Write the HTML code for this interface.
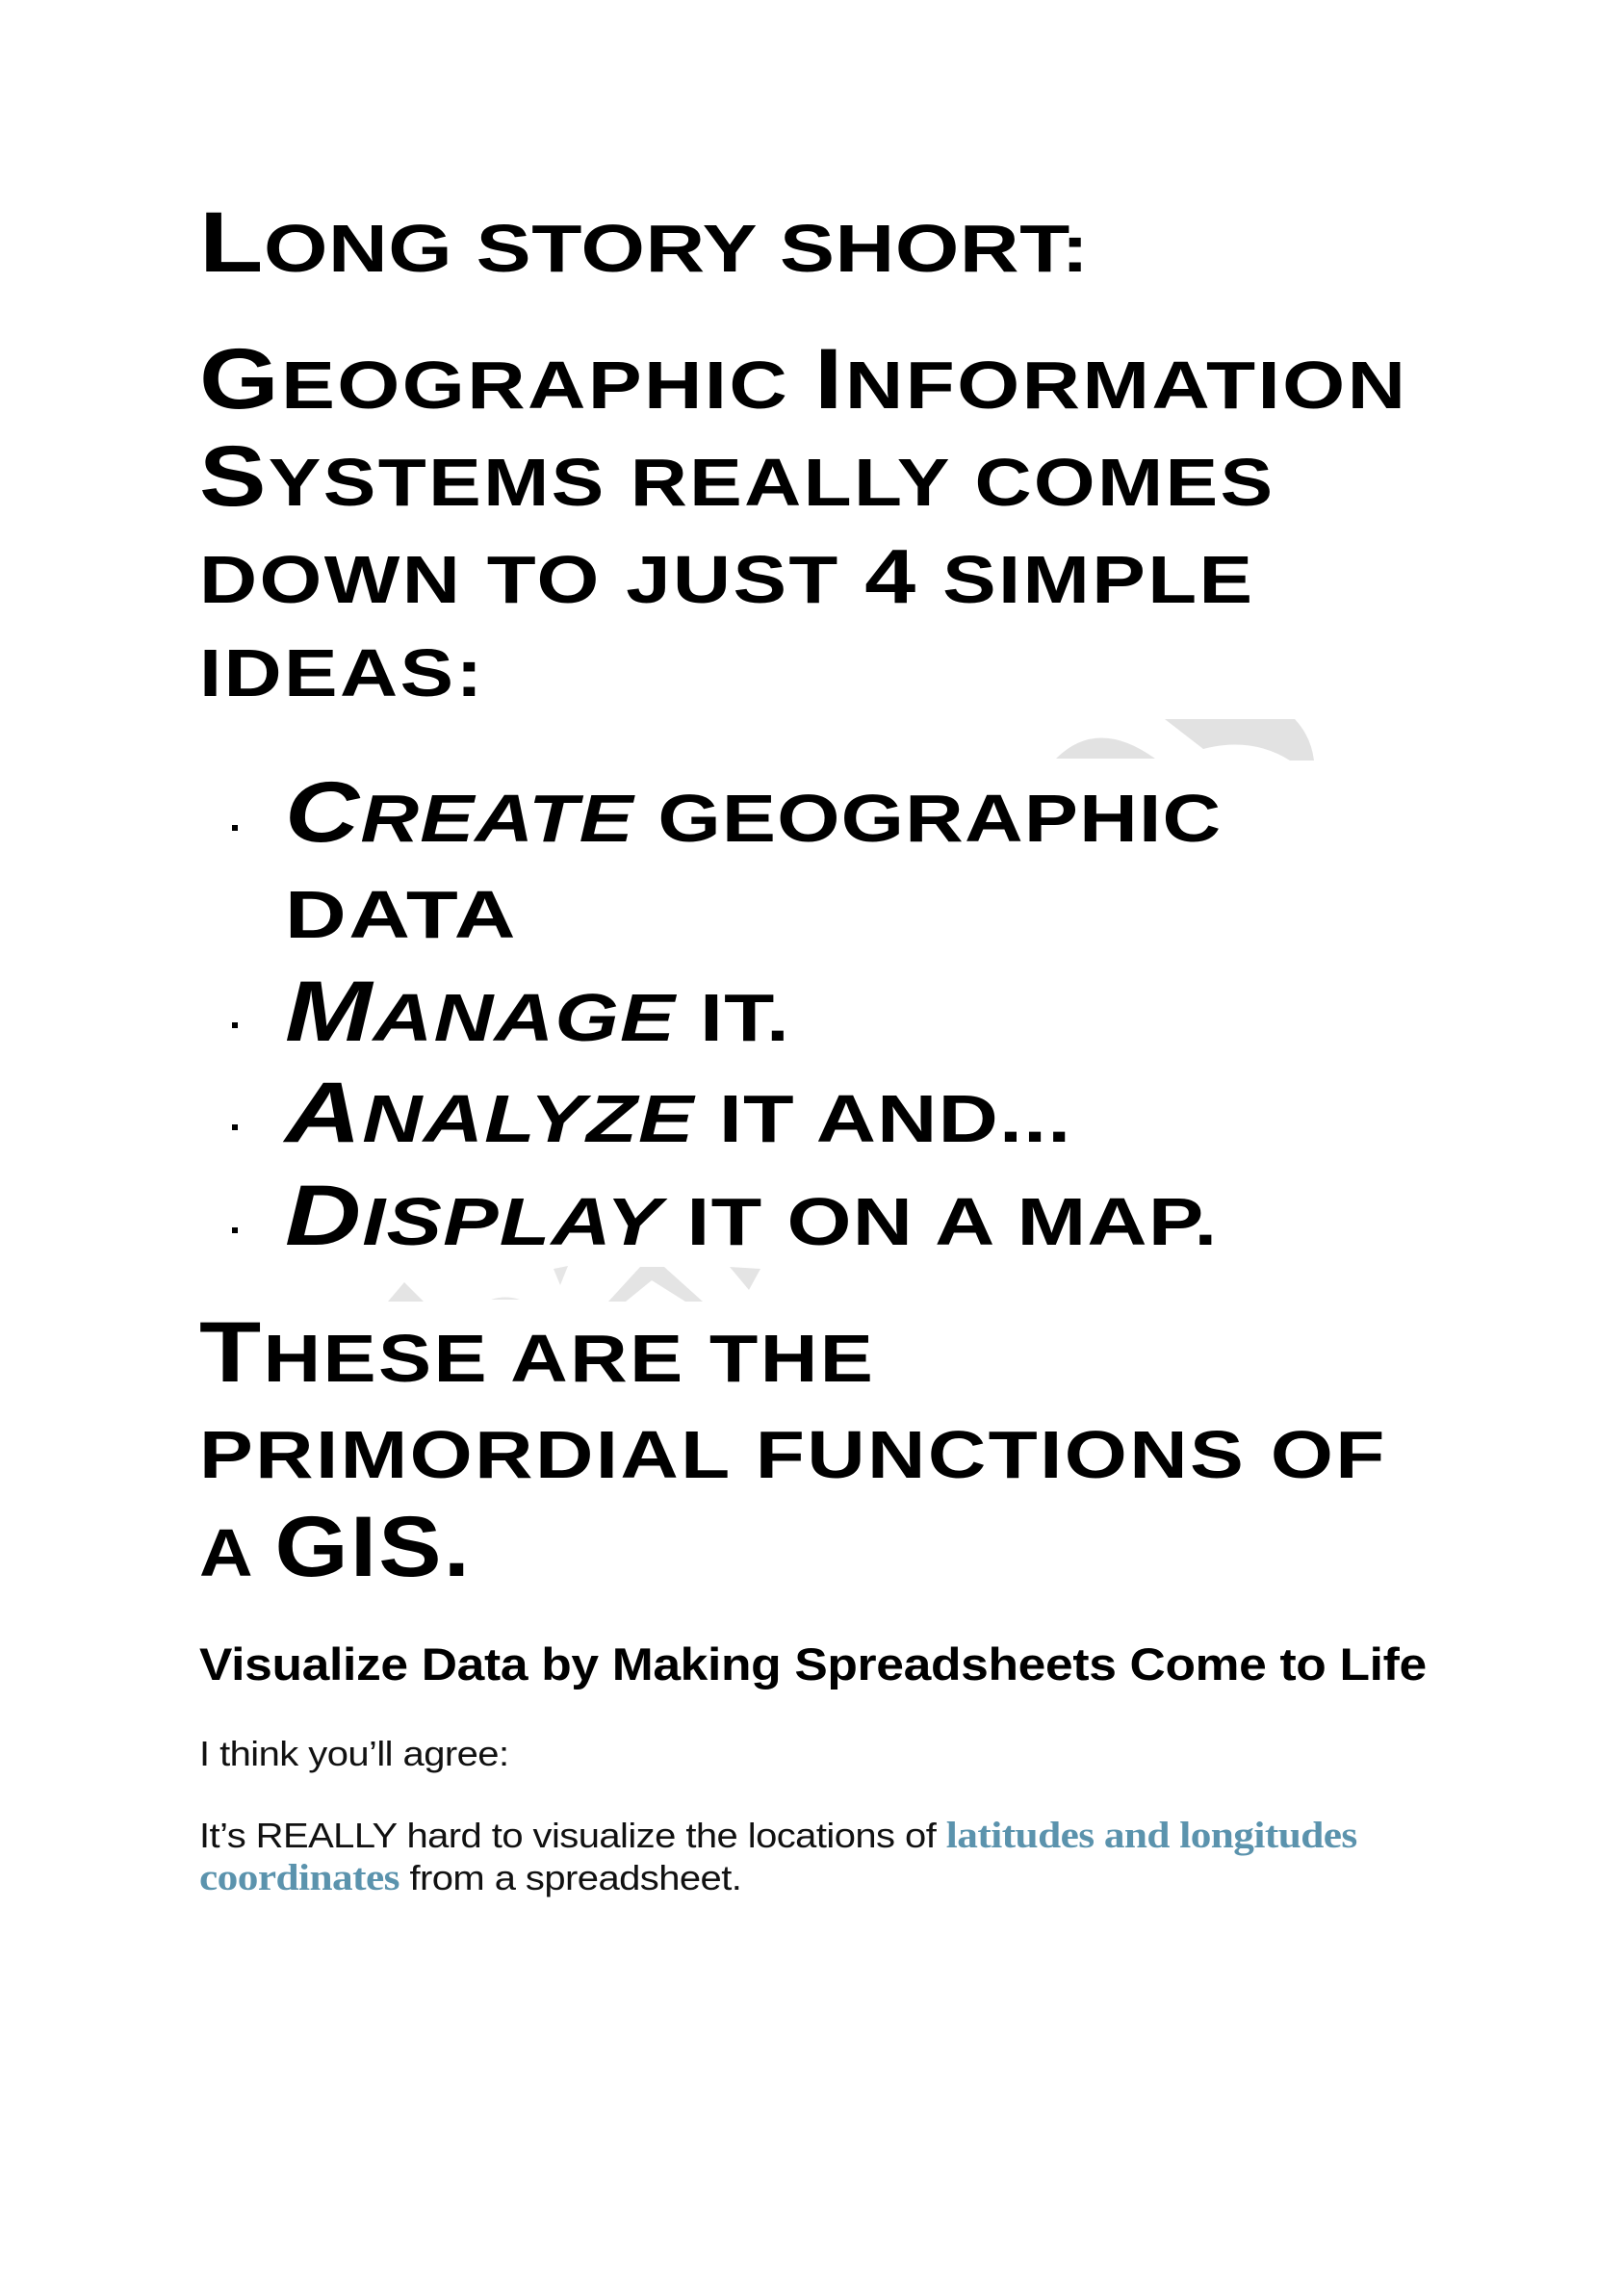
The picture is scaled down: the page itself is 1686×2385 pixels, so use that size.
<!DOCTYPE html>
<html><head><meta charset="utf-8"><style>
html,body{margin:0;padding:0;background:#fff;}
body{width:1686px;height:2385px;position:relative;overflow:hidden;}
.h{position:absolute;left:207px;font-family:"Liberation Sans",sans-serif;font-weight:bold;color:#000;line-height:1;white-space:nowrap;font-size:70px;letter-spacing:1px;text-transform:uppercase;transform-origin:0 0;}
.h b{font-size:89px;}
.h i{font-style:italic;}
.bl{left:296px;}
.dot{position:absolute;left:241px;width:6px;height:6px;background:#000;}
.s{position:absolute;left:207px;font-family:"Liberation Sans",sans-serif;line-height:1;white-space:nowrap;color:#111;transform-origin:0 0;}
.lk{font-family:"Liberation Serif",serif;color:#5b93ad;font-weight:bold;font-size:39px;}
</style></head><body>
<svg style="position:absolute;left:0;top:0" width="1686" height="2385">
<path d="M1097 788 Q1140 745 1200 788 Z" fill="#e2e2e2"/>
<path d="M1210 747 L1345 747 Q1362 765 1365 790 L1340 790 Q1300 765 1250 778 Z" fill="#e2e2e2"/>
<path d="M403 1352 L420 1332 L440 1352 Z" fill="#e4e4e4"/>
<path d="M510 1350 Q525 1345 540 1350 Z" fill="#e6e6e6"/>
<path d="M575 1318 L590 1315 L582 1335 Z" fill="#e6e6e6"/>
<path d="M632 1352 L665 1316 L690 1316 L730 1352 L712 1352 L677 1330 L650 1352 Z" fill="#e4e4e4"/>
<path d="M758 1316 L790 1318 L778 1340 Z" fill="#e4e4e4"/>
</svg>

<div class="h" style="top:207px;letter-spacing:0.5px;transform:scaleX(1.22)"><b>L</b>ong story short:</div>
<div class="h" style="top:349px;letter-spacing:2px;transform:scaleX(1.195)"><b>G</b>eographic <b>I</b>nformation</div>
<div class="h" style="top:450px;letter-spacing:2px;transform:scaleX(1.17)"><b>S</b>ystems really comes</div>
<div class="h" style="top:559px;letter-spacing:2px;transform:scaleX(1.19)">down to just <span style="font-size:80px">4</span> simple</div>
<div class="h" style="top:664px;letter-spacing:2px;transform:scaleX(1.19)">ideas:</div>

<div class="dot" style="top:857px"></div>
<div class="h bl" style="top:799px;letter-spacing:1px;transform:scaleX(1.2)"><i><b>C</b>reate</i> geographic</div>
<div class="h bl" style="top:915px;letter-spacing:2px;transform:scaleX(1.26)">data</div>
<div class="dot" style="top:1062px"></div>
<div class="h bl" style="top:1006px;letter-spacing:1px;transform:scaleX(1.22)"><i><b>M</b>anage</i> it.</div>
<div class="dot" style="top:1168px"></div>
<div class="h bl" style="top:1111px;letter-spacing:1px;transform:scaleX(1.23)"><i><b>A</b>nalyze</i> it and...</div>
<div class="dot" style="top:1275px"></div>
<div class="h bl" style="top:1218px;letter-spacing:1px;transform:scaleX(1.23)"><i><b>D</b>isplay</i> it on a map.</div>

<div class="h" style="top:1360px;letter-spacing:2px;transform:scaleX(1.18)"><b>T</b>hese are the</div>
<div class="h" style="top:1476px;letter-spacing:2px;transform:scaleX(1.195)">primordial functions of</div>
<div class="h" style="top:1562px;letter-spacing:2px;transform:scaleX(1.1)">a <b>GIS.</b></div>

<div class="s" style="top:1705px;font-size:47px;font-weight:bold;color:#000;letter-spacing:-0.3px;transform:scaleX(1.097)">Visualize Data by Making Spreadsheets Come to Life</div>
<div class="s" style="top:1804px;font-size:36px;letter-spacing:-0.5px;transform:scaleX(1.11)">I think you’ll agree:</div>
<div class="s" style="top:1887px;font-size:36px;letter-spacing:-0.5px;transform:scaleX(1.11)">It’s REALLY hard to visualize the locations of <span class="lk">latitudes and longitudes</span></div>
<div class="s" style="top:1931px;font-size:36px;letter-spacing:-0.5px;transform:scaleX(1.11)"><span class="lk">coordinates</span> from a spreadsheet.</div>
</body></html>
